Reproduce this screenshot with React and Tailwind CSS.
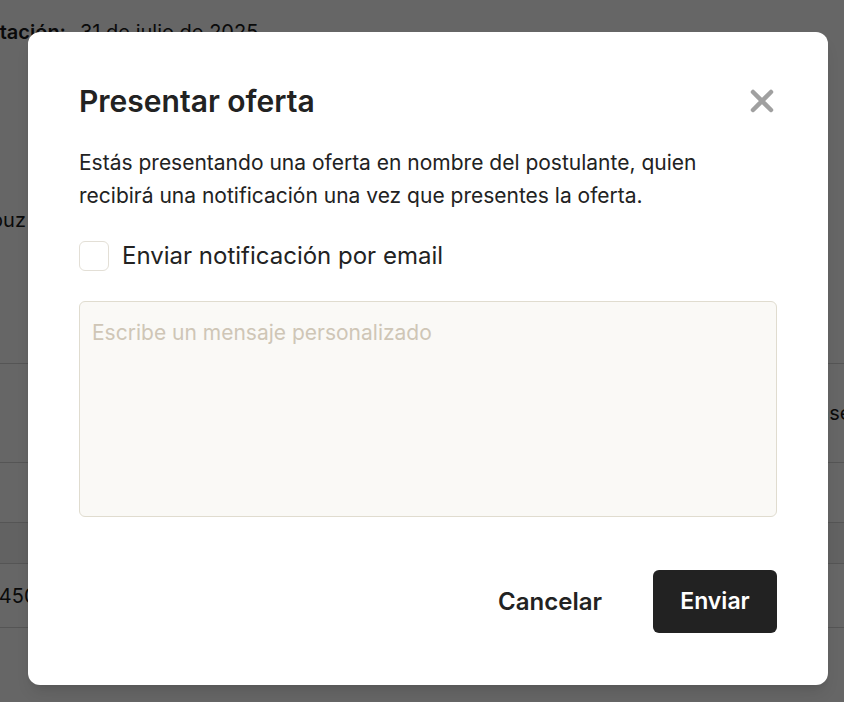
export default function App() {
  return (
    <div className="relative h-[702px] w-[844px] overflow-hidden bg-white font-['Inter',sans-serif] text-[#1a1a1a]">
      {/* page behind the dialog */}
      <div className="flex flex-col text-[20px]">
        <div className="flex h-[64px] items-center whitespace-nowrap">
          <div className="flex w-[66px] shrink-0 justify-end font-semibold">Presentación:</div>
          <span className="ml-[14px]">31 de julio de 2025</span>
        </div>
        <div className="mt-[132px] flex h-[48px] items-center whitespace-nowrap">
          <div className="flex w-[26px] shrink-0 justify-end">Mariana Rebuz</div>
        </div>
        <div className="mt-[119px] h-px bg-[#d4d4d4]" />
        <div className="flex h-[98px] items-center whitespace-nowrap">
          <span className="ml-[805px]">Base</span>
        </div>
        <div className="h-px bg-[#d4d4d4]" />
        <div className="h-[59px]" />
        <div className="h-px bg-[#d4d4d4]" />
        <div className="h-[40px] bg-[#f6f6f6]" />
        <div className="h-px bg-[#d4d4d4]" />
        <div className="flex h-[63px] items-center whitespace-nowrap">
          <span className="ml-[-14px]">$450.000</span>
        </div>
        <div className="h-px bg-[#d4d4d4]" />
      </div>

      {/* overlay */}
      <div className="absolute inset-0 bg-black/60 pl-[28px] pt-[32px]">
        <div className="flex h-[653px] w-[800px] flex-col rounded-[12px] bg-white px-[51px] pt-[50px] pb-[52px] shadow-lg">
          <div className="flex items-start justify-between">
            <h2 className="text-[30px] leading-[38px] font-semibold text-[#222]">Presentar oferta</h2>
            <svg width="24" height="24" viewBox="0 0 24 24" className="mt-[7px] mr-[3px] text-[#a0a0a0]">
              <path d="M3 3L21 21M21 3L3 21" stroke="currentColor" strokeWidth="4.5" strokeLinecap="round" />
            </svg>
          </div>
          <p className="mt-[26px] text-[21px] leading-[33px] text-[#222]">
            Estás presentando una oferta en nombre del postulante, quien
            <br />
            recibirá una notificación una vez que presentes la oferta.
          </p>
          <label className="mt-[29px] flex items-center gap-[13px]">
            <span className="h-[30px] w-[30px] rounded-[6px] border border-[#e3dfd6] bg-white" />
            <span className="text-[24px] leading-[30px] text-[#222]">Enviar notificación por email</span>
          </label>
          <textarea
            placeholder="Escribe un mensaje personalizado"
            className="mt-[30px] h-[216px] w-full resize-none rounded-[6px] border border-[#e0dccf] bg-[#faf9f6] px-[12px] py-[16px] text-[21px] leading-[30px] outline-none placeholder:text-[#cfc6b6]"
          />
          <div className="mt-auto flex items-center justify-end gap-[51px]">
            <button className="text-[24px] font-semibold text-[#222]">Cancelar</button>
            <button className="h-[63px] w-[124px] rounded-[6px] bg-[#222] text-[23px] font-semibold text-white">
              Enviar
            </button>
          </div>
        </div>
      </div>
    </div>
  );
}
